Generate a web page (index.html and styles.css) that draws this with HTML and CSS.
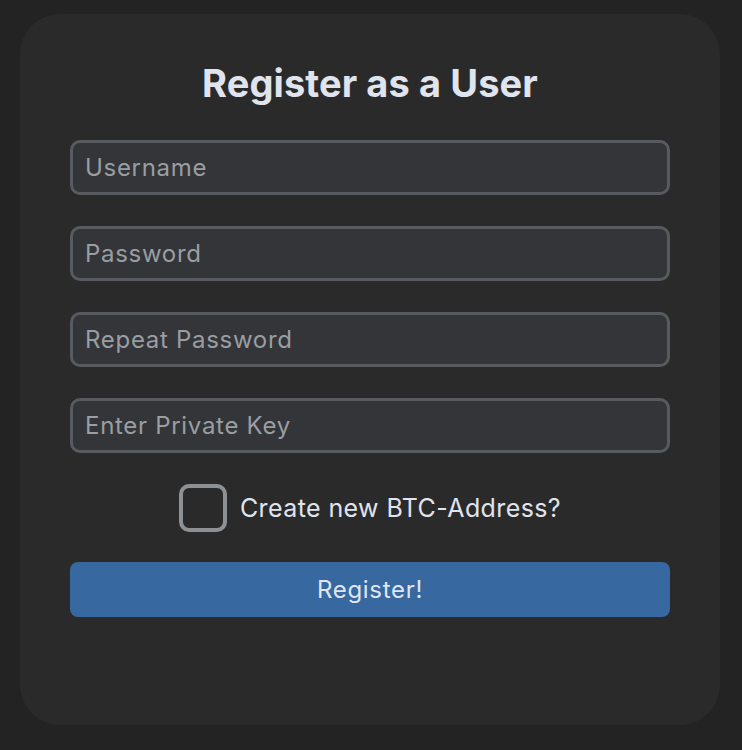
FILE: index.html
```html
<!DOCTYPE html>
<html lang="en">
<head>
<meta charset="utf-8">
<title>Register</title>
<link rel="stylesheet" href="styles.css">
</head>
<body>
<main class="card">
  <h1 class="title">Register as a User</h1>
  <form class="form">
    <input class="field" type="text" placeholder="Username">
    <input class="field" type="password" placeholder="Password">
    <input class="field" type="password" placeholder="Repeat Password">
    <input class="field" type="text" placeholder="Enter Private Key">
    <label class="check-row">
      <input class="check" type="checkbox">
      <span class="check-label">Create new BTC-Address?</span>
    </label>
    <button class="btn" type="button">Register!</button>
  </form>
</main>
</body>
</html>
```
FILE: styles.css
```css
* { box-sizing: border-box; }
html, body { margin: 0; padding: 0; }
body {
  background: #232323;
  font-family: Inter, "Noto Sans", sans-serif;
  padding: 14px 22px 25px 20px;
  height: 750px;
}
.card {
  background: #2a2a2a;
  border-radius: 40px;
  width: 700px;
  height: 711px;
  padding: 46px 50px 0;
}
.title {
  margin: 0;
  text-align: center;
  font-size: 38px;
  line-height: 46px;
  font-weight: 700;
  letter-spacing: 0.1px;
  color: #e0e4ee;
}
.form {
  display: flex;
  flex-direction: column;
  gap: 31px;
  margin-top: 34px;
}
.field {
  display: block;
  width: 100%;
  height: 55px;
  background: #333538;
  border: 3px solid #575b5f;
  border-radius: 10px;
  padding: 0 12px;
  font-family: inherit;
  font-size: 24px;
  letter-spacing: 0.7px;
  color: #e0e4ee;
  outline: none;
}
.field::placeholder { color: #9a9ea3; opacity: 1; }
.check-row {
  display: flex;
  align-items: center;
  justify-content: center;
  gap: 13px;
}
.check {
  appearance: none;
  -webkit-appearance: none;
  margin: 0;
  width: 48px;
  height: 48px;
  border: 4px solid #8e9194;
  border-radius: 10px;
  background: transparent;
  flex: none;
}
.check-label {
  font-size: 25px;
  letter-spacing: 0.4px;
  color: #e0e4ee;
}
.btn {
  height: 55px;
  width: 100%;
  border: none;
  border-radius: 8px;
  background: #3768a0;
  color: #dfe6f0;
  font-family: inherit;
  font-size: 24px;
  letter-spacing: 0.7px;
  margin-top: -1px;
}
```
